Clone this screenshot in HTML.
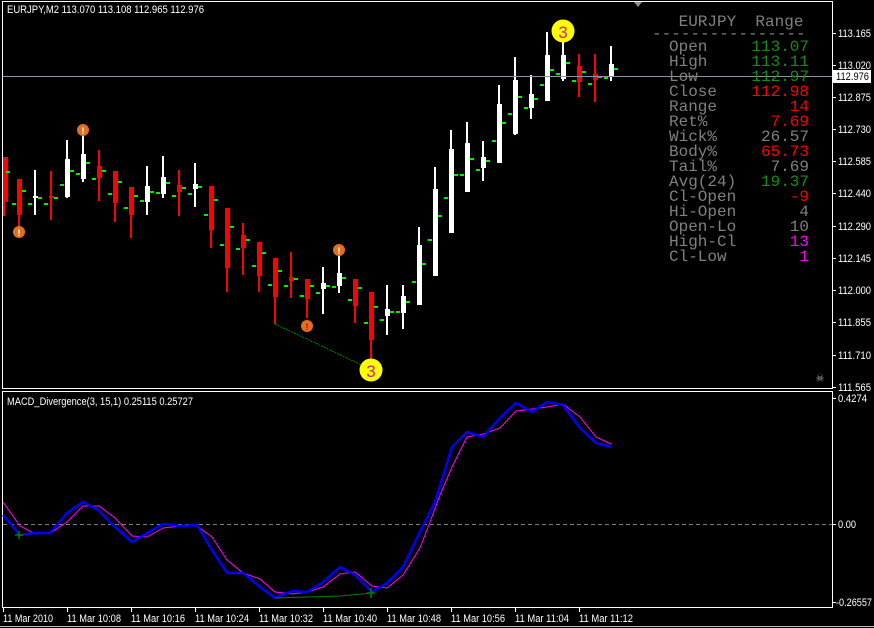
<!DOCTYPE html>
<html><head><meta charset="utf-8"><style>
html,body{margin:0;padding:0;background:#000;width:874px;height:628px;overflow:hidden}
svg{display:block}
.ax{font-family:"Liberation Sans",sans-serif;font-size:11px;fill:#fff}
.mono{font-family:"Liberation Mono",monospace;font-size:16px}
</style></head><body>
<svg id="s" width="874" height="628" viewBox="0 0 874 628" xmlns="http://www.w3.org/2000/svg">
<rect width="874" height="628" fill="#000"/>
<g id="candles"></g>
<line x1="2" y1="76.5" x2="832" y2="76.5" stroke="#8a96a6" stroke-width="1"/>
<line x1="275" y1="324" x2="370" y2="369" stroke="#008000" stroke-width="1" stroke-dasharray="2,1"/>
<g font-family="Liberation Sans,sans-serif" font-weight="bold" text-anchor="middle">
<circle cx="19" cy="232" r="6" fill="#e07020"/><text x="19" y="236" font-size="9" fill="#fff">!</text>
<circle cx="83" cy="130" r="6" fill="#e07020"/><text x="83" y="134" font-size="9" fill="#fff">!</text>
<circle cx="307" cy="326" r="6" fill="#e07020"/><text x="307" y="330" font-size="9" fill="#c00">!</text>
<circle cx="339" cy="250" r="6" fill="#e07020"/><text x="339" y="254" font-size="9" fill="#fff">!</text>
<circle cx="371" cy="370" r="11.5" fill="#ffff00"/><text x="371" y="377" font-size="17" font-weight="normal" fill="#d0208a">3</text>
<circle cx="563" cy="31" r="11.5" fill="#ffff00"/><text x="563" y="38" font-size="17" font-weight="normal" fill="#d0208a">3</text>
</g>
<polygon points="634,2 642,2 638,7" fill="#909090"/>
<g class="mono" fill="#808080">
<text x="669" y="26" xml:space="preserve"> EURJPY  Range</text>
<text x="652" y="38">----------------</text>
<text x="669" y="51">Open</text>
<text x="669" y="66">High</text>
<text x="669" y="81">Low</text>
<text x="669" y="96">Close</text>
<text x="669" y="111">Range</text>
<text x="669" y="126">Ret%</text>
<text x="669" y="141">Wick%</text>
<text x="669" y="156">Body%</text>
<text x="669" y="171">Tail%</text>
<text x="669" y="186">Avg(24)</text>
<text x="669" y="201">Cl-Open</text>
<text x="669" y="216">Hi-Open</text>
<text x="669" y="231">Open-Lo</text>
<text x="669" y="246">High-Cl</text>
<text x="669" y="261">Cl-Low</text>
</g>
<g class="mono" text-anchor="end">
<text x="809" y="51" fill="#1a8a1a">113.07</text>
<text x="809" y="66" fill="#1a8a1a">113.11</text>
<text x="809" y="81" fill="#1a8a1a">112.97</text>
<text x="809" y="96" fill="#ff0000">112.98</text>
<text x="809" y="111" fill="#ff0000">14</text>
<text x="809" y="126" fill="#ff0000">7.69</text>
<text x="809" y="141" fill="#808080">26.57</text>
<text x="809" y="156" fill="#ff0000">65.73</text>
<text x="809" y="171" fill="#808080">7.69</text>
<text x="809" y="186" fill="#1a8a1a">19.37</text>
<text x="809" y="201" fill="#ff0000">-9</text>
<text x="809" y="216" fill="#808080">4</text>
<text x="809" y="231" fill="#808080">10</text>
<text x="809" y="246" fill="#ff00ff">13</text>
<text x="809" y="261" fill="#ff00ff">1</text>
</g>
<text x="820" y="381" font-size="10" fill="#aaa" text-anchor="middle" font-family="DejaVu Sans,sans-serif">☠</text>
<text x="7" y="13" class="ax" textLength="197" lengthAdjust="spacingAndGlyphs">EURJPY,M2  113.070 113.108 112.965 112.976</text>
<g fill="none" stroke="#fff" stroke-width="1">
<rect x="2.5" y="1.5" width="830" height="387"/>
<rect x="2.5" y="391.5" width="830" height="216"/>
</g>
<g id="pax" class="ax"></g>
<rect x="833" y="70" width="38" height="13" fill="#fff"/>
<text x="836" y="80" class="ax" style="fill:#000" textLength="33" lengthAdjust="spacingAndGlyphs">112.976</text>
<text x="7" y="405" class="ax" textLength="186" lengthAdjust="spacingAndGlyphs">MACD_Divergence(3, 15,1) 0.25115 0.25727</text>
<line x1="3" y1="524.5" x2="832" y2="524.5" stroke="#808080" stroke-dasharray="4,3"/>
<polyline id="mag" fill="none" stroke="#ff00ff" stroke-width="1"/>
<polyline id="blu" fill="none" stroke="#0000ff" stroke-width="2.5"/>
<polyline points="275,598 307,597 340,596 372,593" fill="none" stroke="#008000" stroke-width="1"/>
<path d="M371,588V598M367,593H375M19,531V539M15,535H23" stroke="#008000" stroke-width="1.5"/>
<g class="ax">
<line x1="832" y1="398.5" x2="836" y2="398.5" stroke="#fff"/><text x="838" y="402" textLength="29" lengthAdjust="spacingAndGlyphs">0.4274</text>
<line x1="832" y1="524.5" x2="836" y2="524.5" stroke="#fff"/><text x="838" y="528" textLength="18" lengthAdjust="spacingAndGlyphs">0.00</text>
<line x1="832" y1="602.5" x2="836" y2="602.5" stroke="#fff"/><text x="836" y="606" textLength="36" lengthAdjust="spacingAndGlyphs">-0.26557</text>
</g>
<g id="tax" class="ax"></g>
<line x1="0" y1="626.5" x2="874" y2="626.5" stroke="#c0c0c0"/>
</svg>
<script>
var NS="http://www.w3.org/2000/svg";
function el(p,t,a){var e=document.createElementNS(NS,t);for(var k in a)e.setAttribute(k,a[k]);p.appendChild(e);return e;}
var C=[[3,'r',157,216,157,202],[19,'r',179,230,179,215],[35,'w',170,215,196,198],[51,'r',171,220,196,198],
[67,'w',140,198,159,197],[83,'w',130,182,154,179],[99,'r',150,201,166,178],[115,'r',171,222,171,203],
[131,'r',187,238,187,215],[147,'w',166,215,186,202],[163,'w',156,198,177,194],[179,'r',170,216,185,192],
[195,'w',163,207,184,189],[211,'r',186,248,186,230],[227,'r',208,292,208,268],[243,'r',223,275,235,248],
[259,'r',242,292,242,276],[275,'r',258,324,258,297],[291,'r',252,298,277,281],[307,'r',279,318,279,299],
[323,'w',267,314,283,289],[339,'w',250,293,273,286],[355,'r',279,323,279,306],[371,'r',292,365,292,340],
[387,'w',285,335,309,316],[403,'w',285,329,296,313],[419,'w',227,305,245,305],[435,'w',167,276,189,276],
[451,'w',130,233,149,233],[467,'w',122,192,143,192],[483,'w',141,181,157,168],[499,'w',85,163,104,163],
[515,'w',57,135,80,134],[531,'w',75,119,94,108],[547,'w',32,101,55,101],[563,'w',40,81,55,79],
[579,'r',54,97,66,82],[595,'r',54,102,74,80],[611,'w',46,81,64,77]];
var g=document.getElementById('candles');
C.forEach(function(c){var x=c[0],col=c[1]=='r'?'#ff0000':'#ffffff';
 el(g,'rect',{x:Math.max(3,x-1),y:c[2],width:2,height:c[3]-c[2],fill:col});
 el(g,'rect',{x:Math.max(3,x-2),y:c[4],width:5,height:Math.max(2,c[5]-c[4]),fill:col});
 var l=Math.round((c[4]+c[5])/2+6),r=Math.round(c[4]+(c[5]-c[4])*0.3);
 if(x>8)el(g,'rect',{x:x-7,y:l,width:4,height:2,fill:'#00ee00'});
 el(g,'rect',{x:x+3,y:r,width:4,height:2,fill:'#00ee00'});
});
var P=[["113.165",33],["113.020",65],["112.875",97],["112.730",129],["112.585",161],["112.440",193],["112.290",226],["112.145",258],["112.000",290],["111.855",322],["111.710",355],["111.565",387]];
var pa=document.getElementById('pax');
P.forEach(function(p){el(pa,'line',{x1:832,y1:p[1]+.5,x2:836,y2:p[1]+.5,stroke:'#fff'});var t=el(pa,'text',{x:838,y:p[1]+4,textLength:33,lengthAdjust:'spacingAndGlyphs'});t.textContent=p[0];});
var B=[[3,515],[20,535],[35,533],[50,533],[67,513],[83,502],[98,510],[115,527],[132,542],[147,533],[163,524],[180,526],[197,525],[212,550],[227,573],[243,573],[260,587],[275,598],[292,591],[307,592],[323,582],[340,567],[355,575],[372,592],[387,583],[403,567],[420,532],[435,502],[452,447],[467,432],[483,437],[500,418],[516,403],[532,412],[547,402],[563,405],[580,428],[596,443],[611,447]];
var M=[[3,502],[20,526],[35,534],[52,532],[67,522],[83,506],[99,506],[115,518],[132,536],[147,537],[163,528],[180,526],[197,526],[212,537],[227,560],[243,573],[260,579],[275,592],[292,594],[307,592],[323,587],[340,574],[355,572],[372,586],[387,588],[403,575],[420,548],[430,522],[440,495],[452,467],[467,437],[483,434],[500,428],[516,411],[532,409],[547,407],[563,404],[580,417],[596,437],[611,444]];
document.getElementById('blu').setAttribute('points',B.map(function(p){return p.join(',')}).join(' '));
document.getElementById('mag').setAttribute('points',M.map(function(p){return p.join(',')}).join(' '));
var T=[["11 Mar 2010",3,50],["11 Mar 10:08",67,54],["11 Mar 10:16",131,54],["11 Mar 10:24",195,54],["11 Mar 10:32",259,54],["11 Mar 10:40",323,54],["11 Mar 10:48",387,54],["11 Mar 10:56",451,54],["11 Mar 11:04",515,54],["11 Mar 11:12",579,54]];
var ta=document.getElementById('tax');
T.forEach(function(t){el(ta,'line',{x1:t[1]+.5,y1:608,x2:t[1]+.5,y2:612,stroke:'#fff'});var e=el(ta,'text',{x:t[1],y:622,textLength:t[2],lengthAdjust:'spacingAndGlyphs'});e.textContent=t[0];});
</script>
</body></html>
